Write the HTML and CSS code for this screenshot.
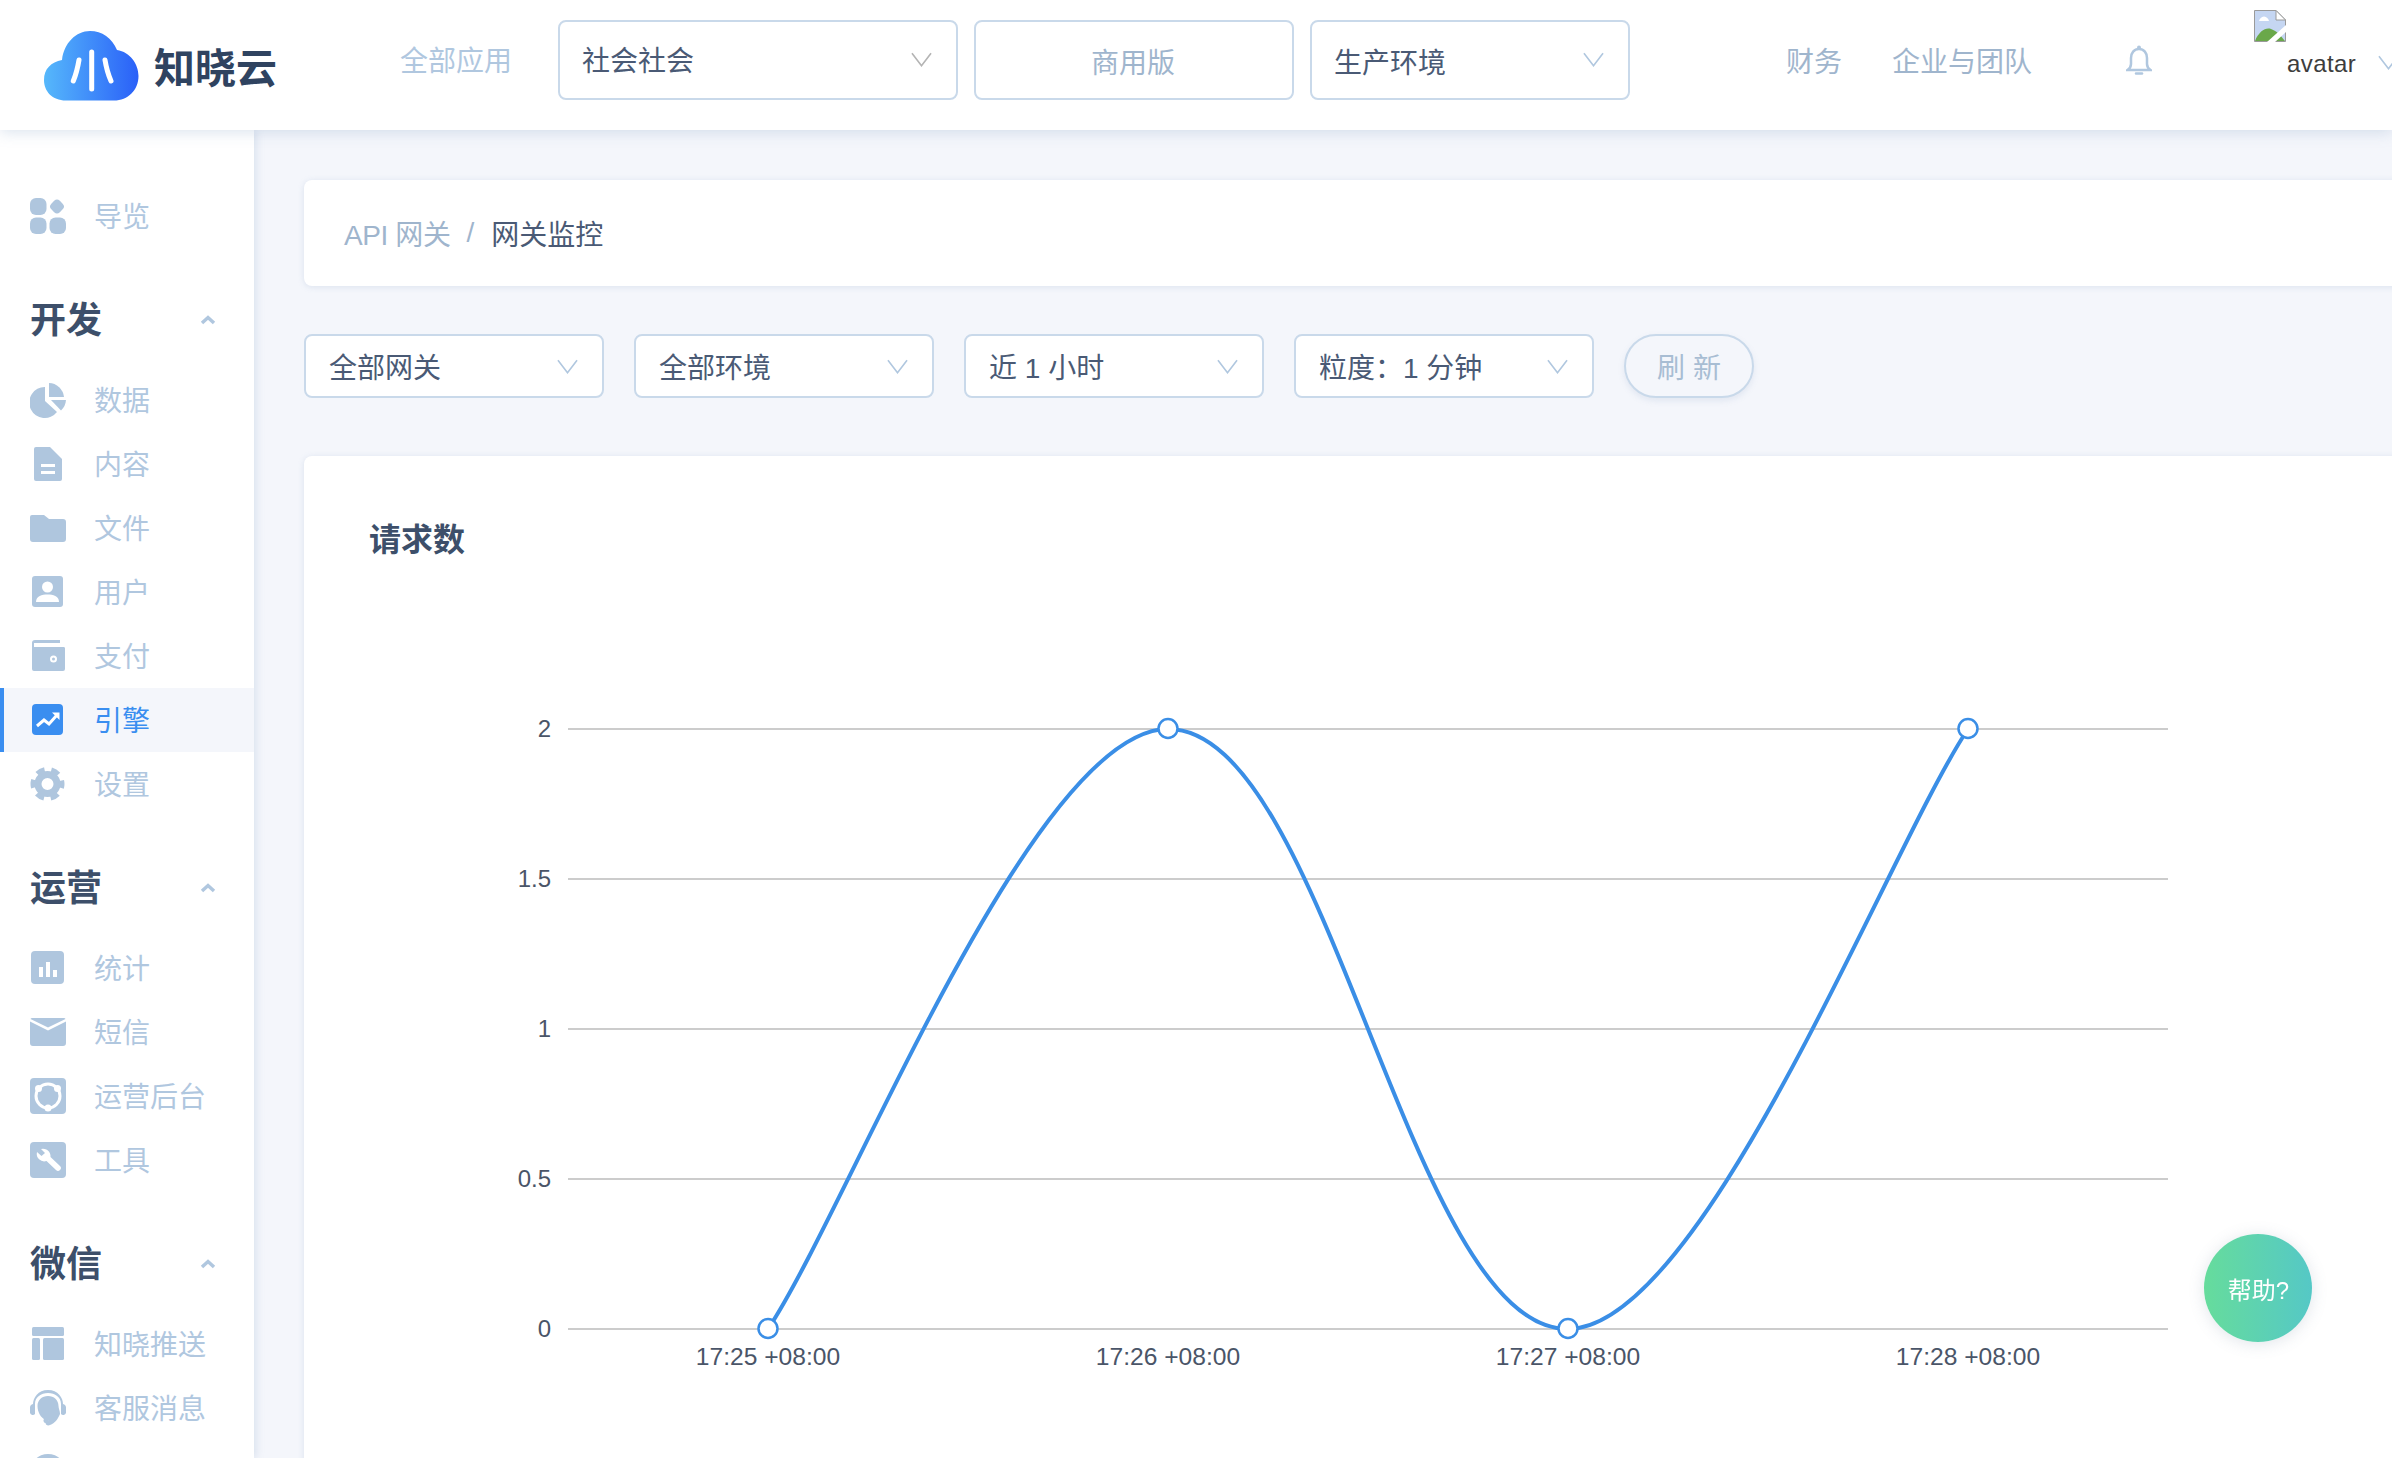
FILE: index.html
```html
<!DOCTYPE html>
<html lang="zh-CN">
  <head>
    <meta charset="UTF-8" />
    <title>网关监控</title>
    <link rel="stylesheet" href="styles.css">
  </head>
  <body>
    <!-- 顶部导航 -->
    <header class="top-bar">
      <svg class="logo-mark" viewBox="0 0 95 70">
        <defs>
          <linearGradient id="logo-grad" x1="0" y1="0" x2="1" y2="0">
            <stop offset="0" stop-color="#56b8fb" />
            <stop offset="1" stop-color="#2a60f8" />
          </linearGradient>
        </defs>
        <path fill="url(#logo-grad)" d="M22 69.5C8 69.5 0 60 0 49C0 38 7 31 18 29C20 12 32 0 46 0C58 0 68 7 73 19C86 21 94.5 33 94.5 45C94.5 59 84 69.5 70 69.5Z" />
        <path fill="none" stroke="#fff" stroke-width="5" stroke-linecap="round" d="M47.7 21V58M35 29Q33 41 29.3 50M61 29Q63 41 67 50" />
      </svg>
      <span class="logo-text">知晓云</span>
      <a class="top-all">全部应用</a>
      <div class="top-select top-select-app">
        <span>社会社会</span>
        <svg class="chevron chevron-grey" viewBox="0 0 22 15"><path d="M1 1L11 14L21 1" /></svg>
      </div>
      <div class="top-select top-select-plan"><span>商用版</span></div>
      <div class="top-select top-select-env">
        <span>生产环境</span>
        <svg class="chevron" viewBox="0 0 22 15"><path d="M1 1L11 14L21 1" /></svg>
      </div>
      <a class="top-link top-link-finance">财务</a>
      <a class="top-link top-link-team">企业与团队</a>
      <svg class="bell" viewBox="0 0 26 30">
        <path d="M13 4C8 4 5 8 5 13V19C5 22 3 24 1.5 25H24.5C23 24 21 22 21 19V13C21 8 18 4 13 4Z" />
        <circle cx="13" cy="2.5" r="2" class="bell-dot" />
        <path d="M10 28.5H16" />
      </svg>
      <div class="avatar">
        <svg class="avatar-broken" viewBox="0 0 32 32">
          <path fill="#c5d6f2" stroke="#9a9a9a" d="M.5.5H22L31.5 10V31.5H.5Z" />
          <path fill="#fff" stroke="#9a9a9a" d="M22 .5V10H31.5Z" />
          <path fill="#fff" d="M5 11Q6 7 10 6.500Q14 7 15 11Z" />
          <path fill="#6aa84a" d="M1 31C5 21 12 17 17 19C23 21 27 26 31 31Z" />
          <path fill="#fff" d="M13 32L32 15V22L21 32Z" />
        </svg>
        <span class="avatar-name">avatar</span>
      </div>
      <svg class="chevron avatar-chevron" viewBox="0 0 22 15"><path d="M1 1L11 14L21 1" /></svg>
    </header>

    <div class="layout">
      <!-- 左侧菜单 -->
      <nav class="side-nav">
        <a class="nav-item">
          <svg class="nav-icon" viewBox="0 0 36 36">
            <rect x="0" y="0" width="16.500" height="17" rx="6" />
            <rect x="21" y="2.500" width="12" height="12" rx="4" transform="rotate(45 27 8.500)" />
            <rect x="0" y="19.500" width="16.500" height="16.500" rx="6" />
            <rect x="19.500" y="19.500" width="16.500" height="16.500" rx="6" />
          </svg>
          <span>导览</span>
        </a>

        <div class="nav-head">
          <span>开发</span>
          <svg class="nav-caret" viewBox="0 0 16 10"><path d="M2 8L8 2.500L14 8" /></svg>
        </div>
        <a class="nav-item">
          <svg class="nav-icon" viewBox="0 0 36 36">
            <path d="M15 5A15.500 15.500 0 1 0 27 30L15 19Z" />
            <path d="M19 1A15.500 15.500 0 0 1 34 15H19Z" />
            <path d="M21 18H36A16 16 0 0 1 31 28.500Z" />
          </svg>
          <span>数据</span>
        </a>
        <a class="nav-item">
          <svg class="nav-icon" viewBox="0 0 36 36">
            <path d="M6 1H20L32 13V33A2 2 0 0 1 30 35H6A2 2 0 0 1 4 33V3A2 2 0 0 1 6 1Z" />
            <path class="cut" d="M11 18H25V21H11ZM11 25H25V28H11Z" />
          </svg>
          <span>内容</span>
        </a>
        <a class="nav-item">
          <svg class="nav-icon" viewBox="0 0 36 36">
            <path d="M2 5H14L19 9H33A3 3 0 0 1 36 12V29A3 3 0 0 1 33 32H3A3 3 0 0 1 0 29V7A2 2 0 0 1 2 5Z" />
          </svg>
          <span>文件</span>
        </a>
        <a class="nav-item">
          <svg class="nav-icon" viewBox="0 0 36 36">
            <rect x="2" y="2" width="31" height="31" rx="3" />
            <circle class="cut" cx="17.500" cy="13" r="5.500" />
            <path class="cut" d="M6 28C6 22 12 20.500 17.500 20.500C23 20.500 29 22 29 28Z" />
          </svg>
          <span>用户</span>
        </a>
        <a class="nav-item">
          <svg class="nav-icon" viewBox="0 0 36 36">
            <path d="M5 2H30V5H4V9H34A1.500 1.500 0 0 1 35 10.500V31A2 2 0 0 1 33 33H4A2 2 0 0 1 2 31V5A3 3 0 0 1 5 2Z" />
            <circle class="cut" cx="23.500" cy="21" r="3.500" />
            <circle cx="23.500" cy="21" r="1.500" />
          </svg>
          <span>支付</span>
        </a>
        <a class="nav-item active">
          <svg class="nav-icon" viewBox="0 0 36 36">
            <rect x="2" y="2" width="31" height="31" rx="4" />
            <path class="cut-line" d="M7 24L14 18L19 22L27 13" />
            <path class="cut" d="M22 10.500H29.500V18Z" />
          </svg>
          <span>引擎</span>
        </a>
        <a class="nav-item">
          <svg class="nav-icon" viewBox="0 0 36 36">
            <circle class="ring" cx="17.500" cy="18" r="9.500" stroke-width="7" />
            <circle class="ring" cx="17.500" cy="18" r="14" stroke-width="6" stroke-dasharray="8 6.660" stroke-dashoffset="4" />
          </svg>
          <span>设置</span>
        </a>

        <div class="nav-head">
          <span>运营</span>
          <svg class="nav-caret" viewBox="0 0 16 10"><path d="M2 8L8 2.500L14 8" /></svg>
        </div>
        <a class="nav-item">
          <svg class="nav-icon" viewBox="0 0 36 36">
            <rect x="1" y="1" width="33" height="33" rx="4" />
            <path class="cut" d="M9 17H13V27H9ZM16 12H20V27H16ZM23 20H27V27H23Z" />
          </svg>
          <span>统计</span>
        </a>
        <a class="nav-item">
          <svg class="nav-icon" viewBox="0 0 36 36">
            <path d="M2 4H34A2 2 0 0 1 35.500 5L18 13.500L.5 5A2 2 0 0 1 2 4Z" />
            <path d="M0 7.500L18 16.500L36 7.500V29A3 3 0 0 1 33 32H3A3 3 0 0 1 0 29Z" />
          </svg>
          <span>短信</span>
        </a>
        <a class="nav-item">
          <svg class="nav-icon" viewBox="0 0 36 36">
            <rect x="0" y="0" width="36" height="36" rx="4" />
            <circle class="cut-line" cx="18" cy="18" r="12" />
            <circle class="cut" cx="8.500" cy="10.500" r="3.500" />
            <circle class="cut" cx="27.500" cy="10.500" r="3.500" />
            <circle class="cut" cx="18" cy="30" r="3.500" />
          </svg>
          <span>运营后台</span>
        </a>
        <a class="nav-item">
          <svg class="nav-icon" viewBox="0 0 36 36">
            <rect x="0" y="0" width="36" height="36" rx="4" />
            <path class="cut" d="M11 7A7.500 7.500 0 0 1 20.500 15L30 24A2.500 2.500 0 0 1 26 28L16.500 19A7.500 7.500 0 0 1 7 10L11.500 14L15 11Z" />
          </svg>
          <span>工具</span>
        </a>

        <div class="nav-head">
          <span>微信</span>
          <svg class="nav-caret" viewBox="0 0 16 10"><path d="M2 8L8 2.500L14 8" /></svg>
        </div>
        <a class="nav-item">
          <svg class="nav-icon" viewBox="0 0 36 36">
            <rect x="2" y="1" width="32" height="9" rx="1.500" />
            <rect x="2" y="12" width="8" height="22" rx="1.500" />
            <rect x="13" y="12" width="21" height="22" rx="1.500" />
          </svg>
          <span>知晓推送</span>
        </a>
        <a class="nav-item">
          <svg class="nav-icon" viewBox="0 0 36 36">
            <path d="M18 0C8 0 3 8 3 14A4 4 0 0 0 0 18V23A3 3 0 0 0 5 24V14C5 7 11 3 18 3C25 3 31 7 31 14V24A3 3 0 0 0 36 23V18A4 4 0 0 0 33 14C33 8 28 0 18 0Z" />
            <path d="M18 6C12 6 7.500 10 7.500 16C7.500 22 11 28 15 29.500H18A3 3 0 0 1 18 31.500H15L16 34.500Q18 36 20 35C25 33 28 29 30 24C30 21 28.500 18 28.500 16C28.500 10 24 6 18 6Z" />
            <circle cx="16" cy="30.500" r="2.500" />
          </svg>
          <span>客服消息</span>
        </a>
        <a class="nav-item">
          <svg class="nav-icon" viewBox="0 0 36 36"><circle cx="18" cy="18" r="18" /></svg>
        </a>
      </nav>

      <!-- 内容区 -->
      <main class="content">
        <div class="breadcrumb">
          <a>API 网关</a>
          <span class="crumb-sep">/</span>
          <span class="crumb-now">网关监控</span>
        </div>

        <div class="filters">
          <div class="filter-select">
            <span>全部网关</span>
            <svg class="chevron" viewBox="0 0 22 15"><path d="M1 1L11 14L21 1" /></svg>
          </div>
          <div class="filter-select">
            <span>全部环境</span>
            <svg class="chevron" viewBox="0 0 22 15"><path d="M1 1L11 14L21 1" /></svg>
          </div>
          <div class="filter-select">
            <span>近 1 小时</span>
            <svg class="chevron" viewBox="0 0 22 15"><path d="M1 1L11 14L21 1" /></svg>
          </div>
          <div class="filter-select">
            <span>粒度：1 分钟</span>
            <svg class="chevron" viewBox="0 0 22 15"><path d="M1 1L11 14L21 1" /></svg>
          </div>
          <button class="refresh-btn">刷 新</button>
        </div>

        <section class="chart-card">
          <h3 class="chart-title">请求数</h3>
          <svg class="chart" viewBox="0 0 2000 800">
            <g class="grid">
              <path d="M264 129H1864" />
              <path d="M264 279H1864" />
              <path d="M264 429H1864" />
              <path d="M264 579H1864" />
              <path d="M264 729H1864" />
            </g>
            <g class="y-labels">
              <text x="247" y="137">2</text>
              <text x="247" y="287">1.5</text>
              <text x="247" y="437">1</text>
              <text x="247" y="587">0.5</text>
              <text x="247" y="737">0</text>
            </g>
            <g class="x-labels">
              <text x="464" y="765">17:25 +08:00</text>
              <text x="864" y="765">17:26 +08:00</text>
              <text x="1264" y="765">17:27 +08:00</text>
              <text x="1664" y="765">17:28 +08:00</text>
            </g>
            <path class="line" d="M464 729C544 609 729 129 864 129C1024 129 1104 729 1264 729C1399 729 1584 249 1664 129" />
            <g class="points">
              <circle cx="464" cy="728.500" r="9.500" />
              <circle cx="864" cy="128.500" r="9.500" />
              <circle cx="1264" cy="728.500" r="9.500" />
              <circle cx="1664" cy="128.500" r="9.500" />
            </g>
          </svg>
        </section>
      </main>
    </div>

    <!-- 悬浮帮助按钮 -->
    <div class="help-btn">帮助?</div>
  </body>
</html>
```

FILE: styles.css
```css
:root {
  --bg-color: #f4f6fb;
  --text-main: #4a5a75;
  --text-dark: #3d4f6a;
  --text-light: #b0c7df;
  --text-link: #9fb5cd;
  --border-color: #c9d9ea;
  --accent-color: #3a8ef0;
}

* {
  box-sizing: border-box;
  margin: 0;
  padding: 0;
}
html,
body {
  height: 100%;
  overflow: hidden;
}
body {
  font-family: "Liberation Sans", "Noto Sans CJK SC", sans-serif;
  font-size: 28px;
  background-color: var(--bg-color);
  color: var(--text-main);
}

/* 顶部导航 */
.top-bar {
  position: relative;
  z-index: 2;
  display: flex;
  align-items: center;
  height: 130px;
  padding-left: 44px;
  background-color: #fff;
  box-shadow: 0 2px 14px rgba(120, 150, 190, 0.28);
}
.logo-mark {
  flex: none;
  width: 95px;
  height: 70px;
  margin-top: 1px;
}
.logo-text {
  flex: none;
  width: 126px;
  margin-left: 15px;
  font-size: 41px;
  font-weight: bold;
  color: #2f4360;
}
.top-all {
  flex: none;
  margin-left: 120px;
  margin-bottom: 12px;
  color: var(--text-light);
}
.top-select {
  flex: none;
  display: flex;
  align-items: center;
  justify-content: space-between;
  height: 80px;
  margin-bottom: 11px;
  padding: 0 24px 0 22px;
  background-color: #fff;
  border: 2px solid var(--border-color);
  border-radius: 8px;
}
.top-select-app {
  width: 400px;
  margin-left: 46px;
}
.top-select-plan {
  justify-content: center;
  width: 320px;
  margin-left: 16px;
  color: var(--text-link);
}
.top-select-env {
  width: 320px;
  margin-left: 16px;
}
.top-select span {
  position: relative;
  top: 1px;
}
.top-select-app span {
  top: -1px;
}
.top-link {
  flex: none;
  margin-bottom: 10px;
  color: var(--text-link);
}
.top-link-finance {
  margin-left: 156px;
}
.top-link-team {
  margin-left: 50px;
}
.bell {
  flex: none;
  width: 26px;
  height: 30px;
  margin-left: 94px;
  margin-bottom: 10px;
  fill: none;
  stroke: var(--text-light);
  stroke-width: 2.5;
  stroke-linecap: round;
}
.bell-dot {
  fill: var(--text-light);
  stroke: none;
}
.avatar {
  flex: none;
  align-self: flex-start;
  width: 104px;
  margin-left: 102px;
  padding-top: 10px;
}
.avatar-broken {
  display: block;
  width: 32px;
  height: 32px;
}
.avatar-name {
  display: block;
  margin: 6px 0 0 33px;
  font-size: 24px;
  line-height: 32px;
  letter-spacing: 0.4px;
  color: #3d3d3d;
}

.chevron {
  flex: none;
  width: 21px;
  height: 15px;
  fill: none;
  stroke: var(--text-light);
  stroke-width: 1.7;
}
.chevron-grey {
  stroke: #b4b4b4;
}
.avatar-chevron {
  margin-left: 20px;
  margin-bottom: 6px;
}

/* 主体布局 */
.layout {
  display: flex;
  height: calc(100% - 130px);
}

/* 左侧菜单 */
.side-nav {
  position: relative;
  z-index: 1;
  flex: none;
  width: 254px;
  height: 100%;
  padding-top: 54px;
  overflow: hidden;
  background-color: #fff;
  box-shadow: 2px 0 8px rgba(120, 150, 190, 0.22);
}
.nav-item {
  display: flex;
  align-items: center;
  height: 64px;
  padding-left: 30px;
  color: var(--text-light);
}
.nav-item span {
  margin-bottom: 3px;
}
.nav-icon {
  flex: none;
  width: 36px;
  height: 36px;
  margin-right: 28px;
  fill: #afc6de;
}
.nav-icon .cut {
  fill: #fff;
}
.nav-icon .cut-line {
  fill: none;
  stroke: #fff;
  stroke-width: 3;
}
.nav-icon .ring {
  fill: none;
  stroke: #afc6de;
}
.nav-item.active {
  color: var(--accent-color);
  background-color: var(--bg-color);
  box-shadow: inset 4px 0 0 var(--accent-color);
}
.nav-item.active .nav-icon {
  fill: var(--accent-color);
}
.nav-head {
  display: flex;
  align-items: center;
  justify-content: space-between;
  height: 96px;
  margin-top: 24px;
  padding: 0 38px 0 30px;
  font-size: 36px;
  font-weight: bold;
  color: var(--text-dark);
}
.nav-head span {
  margin-bottom: 6px;
}
.nav-caret {
  width: 16px;
  height: 10px;
  fill: none;
  stroke: var(--text-light);
  stroke-width: 3.5;
}

/* 内容区 */
.content {
  flex: none;
  width: 2300px;
  padding: 50px 0 0 50px;
}
.breadcrumb {
  display: flex;
  align-items: center;
  height: 106px;
  margin-bottom: 48px;
  padding-left: 40px;
  background-color: #fff;
  border-radius: 8px;
  box-shadow: 0 1px 6px rgba(120, 150, 190, 0.2);
  color: var(--text-link);
}
.breadcrumb a {
  letter-spacing: -0.4px;
}
.crumb-sep {
  margin: 0 17px 0 16px;
}
.crumb-now {
  color: var(--text-main);
}
.filters {
  display: flex;
  gap: 30px;
  height: 64px;
  margin-bottom: 58px;
}
.filter-select {
  display: flex;
  align-items: center;
  justify-content: space-between;
  width: 300px;
  padding: 0 24px 0 23px;
  background-color: #fff;
  border: 2px solid var(--border-color);
  border-radius: 8px;
}
.refresh-btn {
  width: 130px;
  font-family: inherit;
  font-size: 28px;
  color: #a8bdd3;
  background-color: var(--bg-color);
  border: 2px solid var(--border-color);
  border-radius: 32px;
  box-shadow: 0 3px 6px rgba(120, 150, 190, 0.15);
}
.chart-card {
  height: 1100px;
  padding-top: 62px;
  background-color: #fff;
  border-radius: 8px;
  box-shadow: 0 1px 6px rgba(120, 150, 190, 0.2);
}
.chart-title {
  height: 44px;
  padding-left: 65px;
  font-size: 32px;
  line-height: 44px;
  color: var(--text-dark);
}
.chart {
  display: block;
  width: 2000px;
  height: 800px;
  margin-top: 38px;
}
.grid path {
  stroke: #cccccc;
  stroke-width: 2;
}
.y-labels text,
.x-labels text {
  font-size: 24.6px;
  fill: #4a5568;
}
.y-labels text {
  font-size: 24px;
  text-anchor: end;
}
.x-labels text {
  text-anchor: middle;
}
.line {
  fill: none;
  stroke: #3a8ee6;
  stroke-width: 4;
}
.points circle {
  fill: #fff;
  stroke: #3a8ee6;
  stroke-width: 2.5;
}

/* 悬浮帮助按钮 */
.help-btn {
  position: fixed;
  right: 80px;
  bottom: 116px;
  z-index: 3;
  display: flex;
  align-items: center;
  justify-content: center;
  width: 108px;
  height: 108px;
  padding-left: 1px;
  font-size: 24px;
  color: #fff;
  border-radius: 50%;
  background: linear-gradient(90deg, #66dc9c, #55c8c6);
  box-shadow: 0 2px 16px rgba(90, 110, 140, 0.18);
}
```
